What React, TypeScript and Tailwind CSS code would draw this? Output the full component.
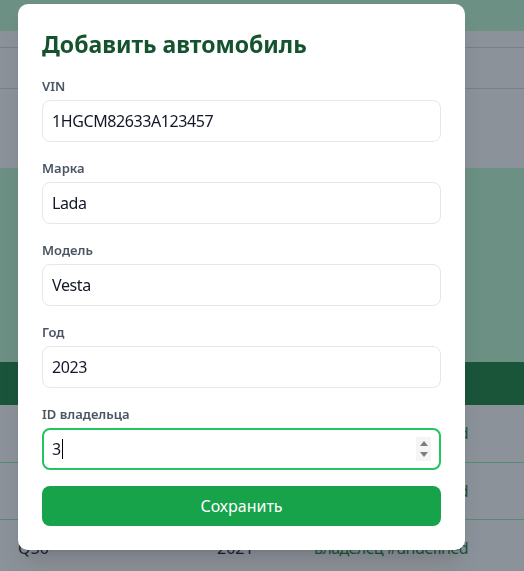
import React from "react";

const fields = [
	{ label: "VIN", value: "1HGCM82633A123457" },
	{ label: "Марка", value: "Lada" },
	{ label: "Модель", value: "Vesta" },
	{ label: "Год", value: "2023" },
];

const rows = [
	{ model: "Vesta", year: "2023", owner: "владелец #undefined" },
	{ model: "Camry", year: "2020", owner: "владелец #undefined" },
	{ model: "Q50", year: "2021", owner: "владелец #undefined" },
];

function Field({ label, value }: { label: string; value: string }) {
	return (
		<div className="flex flex-col gap-1">
			<label className="text-[13px] leading-5 font-semibold text-[#4b5563]">{label}</label>
			<input
				type="text"
				defaultValue={value}
				className="h-[42px] w-full rounded-lg border border-[#e5e7eb] bg-white px-[9px] text-base tracking-[-0.4px] text-[#111827] outline-none"
			/>
		</div>
	);
}

export default function App() {
	return (
		<div className="relative h-[571px] overflow-hidden bg-[#f9fafb] font-['Noto_Sans',sans-serif]">
			<div className="h-[31px] bg-[#bbf7d0]" />
			<div className="h-[137px]">
				<div className="h-[17px] border-b border-[#d1d5db]" />
				<div className="h-[41px] border-b border-[#d1d5db]" />
			</div>
			<div className="h-[194px] bg-[#bbf7d0]" />
			<table className="w-full table-fixed text-left text-base">
				<thead>
					<tr className="h-[43px] bg-[#15803d] text-white">
						<th className="w-[217px] pl-[18px] font-semibold">Модель</th>
						<th className="w-[97px] font-semibold">Год</th>
						<th className="font-semibold">Владелец</th>
					</tr>
				</thead>
				<tbody>
					{rows.map((row) => (
						<tr key={row.model} className="h-[57px] border-b border-[#86efac]">
							<td className="pl-[18px] text-[#111827]">{row.model}</td>
							<td className="text-[#111827]">{row.year}</td>
							<td className="whitespace-nowrap tracking-[-0.6px] text-[#15803d]">{row.owner}</td>
						</tr>
					))}
				</tbody>
			</table>

			<div className="fixed inset-0 bg-[rgba(31,41,55,0.5)] pl-[18px] pt-1">
				<div className="flex w-[447px] flex-col rounded-[10px] bg-white p-6 shadow-xl">
					<h2 className="mb-4 text-[23px] leading-8 font-bold text-[#14532d]">Добавить автомобиль</h2>
					<div className="flex flex-col gap-4">
						{fields.map((f) => (
							<Field key={f.label} label={f.label} value={f.value} />
						))}
						<div className="flex flex-col gap-1">
							<label className="text-[13px] leading-5 font-semibold text-[#4b5563]">ID владельца</label>
							<div className="flex h-[42px] items-center rounded-lg border-2 border-[#22c55e] bg-white pr-2 pl-2">
								<span className="text-base text-[#111827]">3</span>
								<span className="ml-px h-5 w-px bg-black" />
								<div className="ml-auto flex h-6 w-[15px] flex-col items-center justify-center gap-[6px] bg-[#f5f5f5]">
									<svg width="8" height="5" viewBox="0 0 8 5">
										<path d="M4 0 L8 5 L0 5 Z" fill="#7d7d7d" />
									</svg>
									<svg width="8" height="5" viewBox="0 0 8 5">
										<path d="M0 0 L8 0 L4 5 Z" fill="#7d7d7d" />
									</svg>
								</div>
							</div>
						</div>
						<button
							type="button"
							className="h-10 w-full rounded-lg bg-[#16a34a] text-base text-white"
						>
							Сохранить
						</button>
					</div>
				</div>
			</div>
		</div>
	);
}
